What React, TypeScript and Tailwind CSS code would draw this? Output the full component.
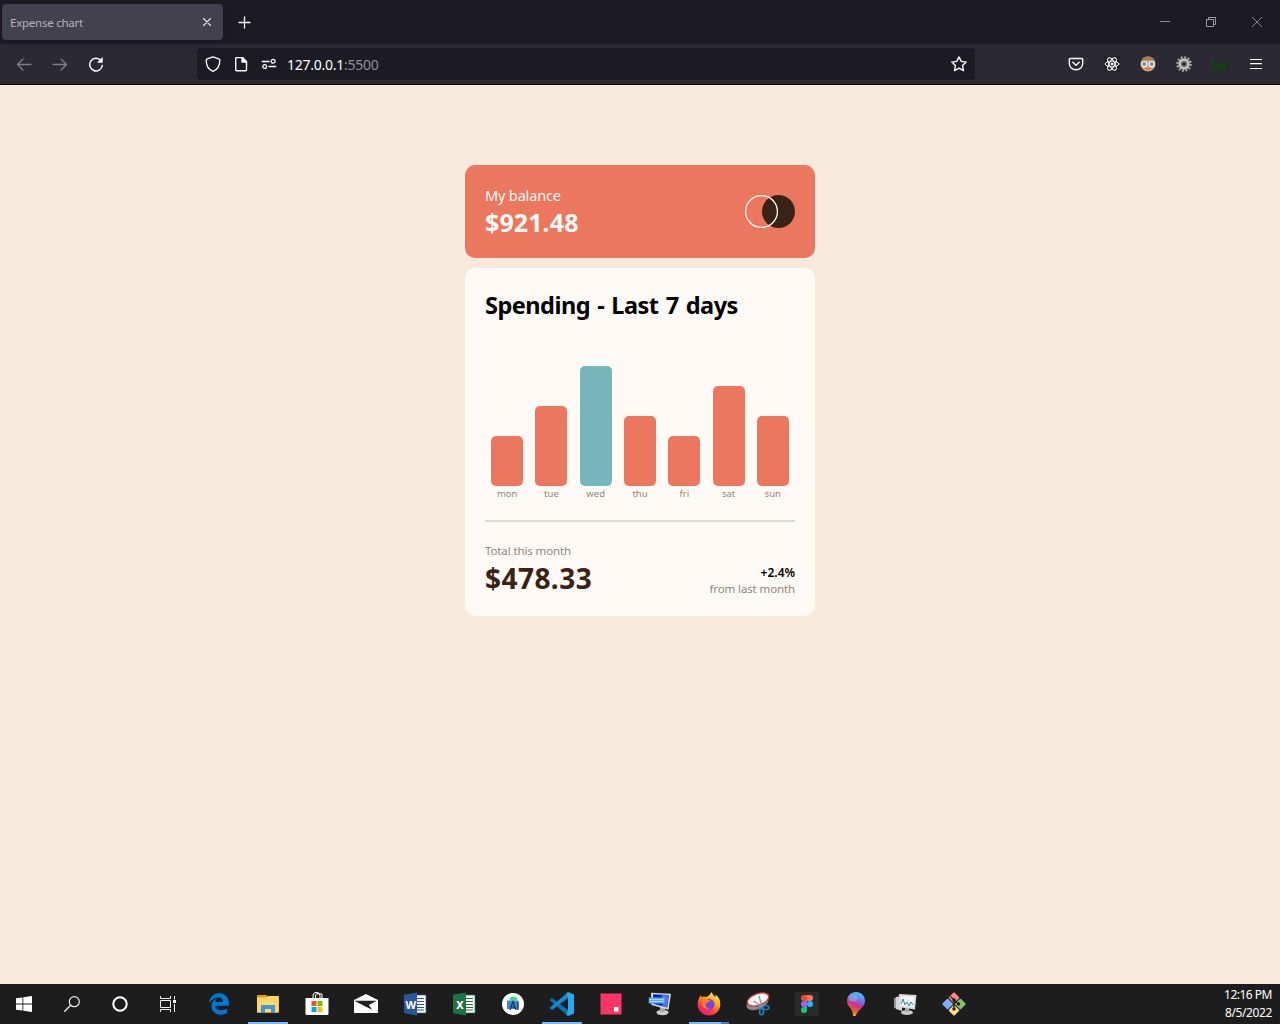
import React from "react";
import { FaEdgeLegacy } from "react-icons/fa6";

type GlyphProps = { children: React.ReactNode; size?: string; box?: string; className?: string };

function Glyph({ children, size = "size-6", box = "0 0 24 24", className = "" }: GlyphProps) {
  return (
    <svg viewBox={box} fill="none" className={`block shrink-0 ${size} ${className}`}>
      {children}
    </svg>
  );
}

function Tool({ children, className = "text-[#fbfbfe]" }: { children: React.ReactNode; className?: string }) {
  return (
    <Glyph size="size-4" box="0 0 16 16" className={className}>
      <g stroke="currentColor" strokeWidth="1.3" strokeLinecap="round" strokeLinejoin="round">
        {children}
      </g>
    </Glyph>
  );
}

function TabStrip() {
  return (
    <div className="flex h-11 items-center bg-[#1c1b22] pl-0.5">
      <div className="flex h-9 w-[221px] items-center justify-between rounded bg-[#42414d] pr-2 pl-2 shadow-sm">
        <span className="pt-0.5 text-[11.5px] tracking-[-0.25px] text-[#b4b3bb]">Expense chart</span>
        <Tool className="text-[#e8e8ec]">
          <path d="M4.5 4.5l7 7M11.5 4.5l-7 7" strokeWidth="1.1" />
        </Tool>
      </div>
      <Tool className="ml-[13px] text-[#fbfbfe]">
        <path d="M8.5 3v11M3 8.5h11" />
      </Tool>
      <div className="ml-auto flex">
        <div className="flex w-[46px] justify-center">
          <Glyph size="size-[10px]" box="0 0 10 10"><path d="M0 4.5h10" stroke="#8d8c92" /></Glyph>
        </div>
        <div className="flex w-[46px] justify-center">
          <Glyph size="size-[10px]" box="0 0 10 10"><path d="M.5 2.5h7v7h-7zM2.500 2.500V.5h7v7h-2" stroke="#98979d" /></Glyph>
        </div>
        <div className="flex w-[46px] justify-center">
          <Glyph size="size-[10px]" box="0 0 10 10"><path d="M0 0l10 10M10 0L0 10" stroke="#98979d" strokeWidth=".9" /></Glyph>
        </div>
      </div>
    </div>
  );
}

function Extensions() {
  return (
    <div className="ml-auto flex items-center gap-5 pr-4">
      <Tool>
        <path d="M2.300 2.500h11.400q1 0 1 1v4a6.700 6.300 0 0 1-13.400 0v-4q0-1 1-1zM4.800 6.300L8 9.300l3.200-3" strokeWidth="1.4" />
      </Tool>
      <Tool>
        <rect width="16" height="16" fill="#23222b" stroke="none" />
        <g strokeWidth="1">
          <ellipse cx="8" cy="8" rx="6.900" ry="2.800" />
          <ellipse cx="8" cy="8" rx="6.900" ry="2.800" transform="rotate(60 8 8)" />
          <ellipse cx="8" cy="8" rx="6.900" ry="2.800" transform="rotate(120 8 8)" />
          <circle cx="8" cy="8" r="1" fill="currentColor" />
        </g>
      </Tool>
      <Glyph size="size-4" box="0 0 16 16">
        <circle cx="8" cy="8" r="7.500" fill="#d99c76" />
        <path d="M.6 6.500C1 2.700 4 .5 8 .5s7 2.200 7.400 6L12 5 9 4 4.500 5z" fill="#a57c50" />
        <circle cx="4.200" cy="8" r="2.600" fill="#5c9fb2" stroke="#e9f3f4" strokeWidth="1.200" />
        <circle cx="11.800" cy="8" r="2.600" fill="#5c9fb2" stroke="#e9f3f4" strokeWidth="1.200" />
        <path d="M5.500 12.500q2.500 1 5 0" stroke="#b9765a" />
      </Glyph>
      <Glyph size="size-4" box="0 0 16 16">
        <circle cx="8" cy="8" r="6.600" stroke="#a9a8a5" strokeWidth="2.400" strokeDasharray="1.900 1.556" />
        <circle cx="8" cy="8" r="4.200" stroke="#bfbebb" strokeWidth="3" />
        <circle cx="8" cy="8" r="2.300" fill="#29282c" stroke="#77767a" />
      </Glyph>
      <span className="flex h-4 w-4 -translate-x-px items-center justify-center pt-0.5 font-['Lato'] text-[13px] leading-none font-black tracking-[-0.5px] text-[#0c470d] italic">bw</span>
      <Tool>
        <path d="M2.500 3.500h11M2.500 7.700h11M2.500 12.500h11" strokeWidth="1.200" />
      </Tool>
    </div>
  );
}

function NavBar() {
  return (
    <div className="flex h-[41px] items-center border-b border-[#0c0c0d] bg-[#2b2a33] pl-4">
      <div className="flex w-[181px] gap-5">
        <Tool className="text-[#7f7e86]"><path d="M15 8.500H1.500M7 3L1.500 8.500 7 14" /></Tool>
        <Tool className="text-[#7f7e86]"><path d="M1 8.500h13.500M9 3l5.500 5.500L9 14" /></Tool>
        <Tool>
          <path d="M12.900 4.600A6.300 6.300 0 1 0 14.300 9.500" strokeWidth="1.500" />
          <path d="M14.300 2v4.300H10z" fill="currentColor" strokeWidth=".8" />
        </Tool>
      </div>
      <div className="flex h-8 w-[778px] items-center gap-3 rounded bg-[#1c1b22] px-2">
        <Tool><path d="M8 .8l5.800 2q1 .3 1 1.400C14.800 9.500 12.500 13.500 8 15.300 3.500 13.500 1.200 9.500 1.200 4.200q0-1.100 1-1.400z" strokeWidth="1.400" /></Tool>
        <Tool>
          <path d="M3.700 1.600h5.800l4 4v8.200q0 1-1 1H3.700q-1 0-1-1V2.600q0-1 1-1z" strokeWidth="1.400" />
          <path d="M9 1.800v4.200h4.300z" fill="currentColor" />
        </Tool>
        <Tool>
          <path d="M1.200 5.500h7M8 10.500h6.800" strokeWidth="1.300" />
          <circle cx="12.200" cy="5.300" r="1.900" /><circle cx="3.700" cy="10.500" r="1.900" />
        </Tool>
        <span className="-ml-0.5 text-[14px] tracking-[-0.26px] text-[#fbfbfe]">127.0.0.1<span className="text-[#8f8f97]">:5500</span></span>
        <Tool className="ml-auto text-[#fbfbfe]">
          <path d="M8 .9l2.200 4.500 5 .7-3.600 3.500.9 5L8 12.200l-4.500 2.400.9-5L.8 6.100l5-.7z" strokeWidth="1.400" />
        </Tool>
      </div>
      <Extensions />
    </div>
  );
}

const days = [
  { day: "mon", bar: "h-[50px] bg-[#ec775f]" },
  { day: "tue", bar: "h-20 bg-[#ec775f]" },
  { day: "wed", bar: "h-[120px] bg-[#76b5bc]" },
  { day: "thu", bar: "h-[70px] bg-[#ec775f]" },
  { day: "fri", bar: "h-[50px] bg-[#ec775f]" },
  { day: "sat", bar: "h-[100px] bg-[#ec775f]" },
  { day: "sun", bar: "h-[70px] bg-[#ec775f]" },
];

function Dashboard() {
  return (
    <main className="flex flex-1 flex-col items-center gap-2.5 bg-[#f7e9dc] pt-20">
      <section className="flex h-[93px] w-[350px] items-center justify-between rounded-[10px] bg-[#ec775f] px-5 text-[#fffaf5]">
        <div>
          <p className="text-[14.500px] leading-5 tracking-[-0.15px]">My balance</p>
          <p className="pt-px text-[25px] leading-8 font-bold tracking-[0.1px]">$921.48</p>
        </div>
        <Glyph size="h-[33px] w-[50px]" box="0 0 50 33">
          <circle cx="33.500" cy="16.500" r="16.500" fill="#382314" />
          <circle cx="16.500" cy="16.500" r="15.900" stroke="#fff" strokeWidth="1.300" />
        </Glyph>
      </section>
      <section className="h-[348px] w-[350px] rounded-[10px] bg-[#fffaf5] px-5">
        <h1 className="pt-5 text-[23.500px] leading-[34px] font-bold tracking-[-0.5px] [word-spacing:1.500px] whitespace-nowrap text-black">Spending - Last 7 days</h1>
        <div className="mt-11 flex h-[134px] items-end justify-between">
          {days.map(({ day, bar }) => (
            <div key={day} className="flex w-[44.300px] flex-col items-center">
              <div className={`w-8 rounded-[5px] ${bar}`} />
              <span className="h-[14px] text-[9.500px] leading-[15px] text-[#92857a]">{day}</span>
            </div>
          ))}
        </div>
        <div className="mt-5 border-t-2 border-[#dfdbd6]" />
        <div className="mt-5 flex items-end justify-between">
          <div>
            <p className="pt-px text-[11.500px] leading-4 tracking-[-0.12px] text-[#92857a]">Total this month</p>
            <p className="text-[28px] leading-[39px] font-bold tracking-[0.45px] text-[#382314]">$478.33</p>
          </div>
          <div className="pb-px text-right text-[12px] leading-4">
            <p className="font-semibold text-black">+2.4%</p>
            <p className="text-[11.500px] tracking-[-0.12px] text-[#92857a]">from last month</p>
          </div>
        </div>
      </section>
    </main>
  );
}

const office = (color: string, dark: string, letter: string) => (
  <div className="relative flex h-6 w-6 items-center justify-center">
    <Glyph>
      <path d="M12 3h11v18H12z" fill="#fff" stroke={color} strokeWidth=".7" />
      <path d="M14 6.500h7M14 9.500h7M14 12.500h7M14 15.500h7M14 18h7" stroke={dark} />
      <path d="M1 2.800L14 .5v23L1 21.200z" fill={color} />
    </Glyph>
    <span className="absolute inset-y-0 left-0 flex w-[15px] items-center justify-center text-[11px] leading-none font-bold text-white">{letter}</span>
  </div>
);

const systemIcons = [
  <Glyph size="size-4" box="0 0 16 16">
    <path d="M0 2.300L6.500 1.400v6.200H0zM7.300 1.300L16 0v7.600H7.300zM0 8.400h6.500v6.200L0 13.700zM7.300 8.400H16V16l-8.700-1.300z" fill="#fff" />
  </Glyph>,
  <Glyph size="size-4" box="0 0 16 16">
    <circle cx="10.300" cy="5.700" r="5" stroke="#eee" strokeWidth="1.200" />
    <path d="M6.700 9.300L.3 15.700" stroke="#eee" strokeWidth="1.300" />
  </Glyph>,
  <Glyph size="size-4" box="0 0 16 16"><circle cx="8" cy="8" r="6.700" stroke="#fff" strokeWidth="2" /></Glyph>,
  <Glyph size="size-4" box="0 0 16 16">
    <path d="M.5 0v2.500h10V0M.5 16v-2.500h10V16M.5 4.500h10v7H.5zM14.500 0v3.500M14.500 8v8" stroke="#eee" />
    <path d="M13 4h3v3h-3z" fill="#fff" />
  </Glyph>,
];

const apps: { name: string; running?: string; icon: React.ReactNode }[] = [
  { name: "edge", icon: <FaEdgeLegacy className="size-[22px] text-[#0078d7]" /> },
  {
    name: "files", running: "w-10",
    icon: (
      <Glyph>
        <path d="M1 3h9.500l1.500 2h11v15.500H1z" fill="#e79c0c" />
        <path d="M1 5.500h10L12 4h10.700v16.500H1z" fill="#ffd768" />
        <path d="M5 21v-7q0-1 1-1h12q1 0 1 1v7h-4v-4H9v4z" fill="#3c97df" />
      </Glyph>
    ),
  },
  {
    name: "store",
    icon: (
      <Glyph>
        <path d="M8 7V4.500q0-4 3.500-4T15 4.500V7M10.500 7V4.500q0-3 3.500-3t3 3V7" stroke="#eee" strokeWidth="1.100" />
        <path d="M.5 6h23v15.500q0 1.500-1.500 1.500H2q-1.500 0-1.500-1.500z" fill="#fff" />
        <path d="M6.500 9h5v5h-5z" fill="#f05125" /><path d="M12.500 9h5v5h-5z" fill="#7fba00" />
        <path d="M6.500 15h5v5h-5z" fill="#00a4ef" /><path d="M12.500 15h5v5h-5z" fill="#ffb900" />
      </Glyph>
    ),
  },
  {
    name: "mail",
    icon: (
      <Glyph>
        <path d="M0 8L12 2l12 6v13H0z" fill="#fff" />
        <path d="M.3 8.700h22.500l-8 4.300 3.500 4.700-7.300-3.400z" fill="#202020" />
      </Glyph>
    ),
  },
  { name: "word", icon: office("#2b579a", "#2b579a", "W") },
  { name: "excel", icon: office("#217346", "#217346", "X") },
  {
    name: "android",
    icon: (
      <Glyph>
        <circle cx="12" cy="12" r="11" fill="#fff" />
        <path d="M6 8.500h11.500V17H6z" fill="#3b84e5" />
        <path d="M8.500 8.500a4 4 0 0 1 8 0z" fill="#3ddc84" />
        <path d="M9 18l3-8.500 3 8.500M10.500 15h3M17 10v8" stroke="#173246" strokeWidth="1.200" />
      </Glyph>
    ),
  },
  {
    name: "code", running: "w-10",
    icon: (
      <Glyph>
        <path d="M0 7.700L2 6l16 12v6L.3 8.800z" fill="#0872b6" />
        <path d="M0 16.300L2 18 18 6V0L.3 15.200z" fill="#1588d1" />
        <path d="M18 0l6 2.500v19L18 24l-1.500-1.500L18 18V6l-1.500-4.500z" fill="#27a9f2" />
      </Glyph>
    ),
  },
  {
    name: "recorder",
    icon: <Glyph><path d="M1.500 1.500h21v21h-21z" fill="#ff3566" stroke="#8d2742" strokeWidth=".6" /><path d="M15 15h4.500v4.500H15z" fill="#fff" /></Glyph>,
  },
  {
    name: "remote",
    icon: (
      <Glyph>
        <ellipse cx="14.500" cy="20.500" rx="6" ry="2.700" fill="#cfcfcb" /><path d="M12 15h5v5h-5z" fill="#aaa" />
        <path d="M3 .8l20 1-2.500 16L3.500 13z" fill="#dbdcda" />
        <path d="M5 2.300l16 .7-1.700 12.500L5.500 12z" fill="#0926b5" />
        <path d="M13 2.700l7.700.4-1.700 12-5-1.200 2-5z" fill="#5278db" />
        <path d="M.7 5.500h16v6H.7z" fill="#5aaaf0" /><path d="M2 7.500h13.500M2 9.500h13.500" stroke="#fff" strokeWidth=".8" strokeDasharray="1.500 1" />
      </Glyph>
    ),
  },
  {
    name: "firefox", running: "w-8",
    icon: (
      <Glyph>
        <defs>
          <linearGradient id="fox" x1="19" y1="1" x2="5" y2="23" gradientUnits="userSpaceOnUse"><stop stopColor="#fff44f" /><stop offset=".4" stopColor="#ff980e" /><stop offset=".7" stopColor="#ff3647" /><stop offset="1" stopColor="#e31587" /></linearGradient>
        </defs>
        <path d="M14.500 0q1 3 4 5 .5-1 0-2.500 4.800 3.500 4.800 9.700a11.300 11.300 0 0 1-22.600 0Q.7 7 3.700 3.300l1 2Q7 3.700 9 5q3.500-1 5.500-5z" fill="url(#fox)" />
        <circle cx="12.300" cy="12.300" r="5.300" fill="#7543e5" />
        <path d="M4.500 8.200Q8 6.500 10.300 8q2 .2 3.200 0-1 1.700-3 2.300-2 1-2 3 .5 2.700 4 3.200-3 1.200-5.500-.7-3-2.600-2.500-7.600z" fill="#ff7b25" />
      </Glyph>
    ),
  },
  {
    name: "snip",
    icon: (
      <Glyph>
        <ellipse cx="11.500" cy="11" rx="11.500" ry="6.300" transform="rotate(-22 11.500 11)" fill="#89898b" />
        <ellipse cx="12" cy="7.500" rx="11.200" ry="5.700" transform="rotate(-20 12 7.500)" fill="#f5f5f5" stroke="#d93640" strokeWidth="1.300" />
        <path d="M13 4l3 10.500M7.500 9l8.500 5.500" stroke="#8b8d8f" strokeWidth="1.200" />
        <ellipse cx="20" cy="15.500" rx="3" ry="2" stroke="#1982bd" strokeWidth="1.600" /><ellipse cx="15.500" cy="19.700" rx="2" ry="3" stroke="#1982bd" strokeWidth="1.600" />
      </Glyph>
    ),
  },
  {
    name: "figma",
    icon: (
      <Glyph>
        <rect width="24" height="24" rx="1" fill="#2a2a2a" />
        <path d="M12 3H9a3 3 0 0 0 0 6h3z" fill="#f24e1e" /><path d="M12 3h3a3 3 0 0 1 0 6h-3z" fill="#ff7262" />
        <path d="M12 9H9a3 3 0 0 0 0 6h3z" fill="#a259ff" /><circle cx="15" cy="12" r="3" fill="#1abcfe" />
        <path d="M12 15H9a3 3 0 1 0 3 3z" fill="#0acf83" />
      </Glyph>
    ),
  },
  {
    name: "paint",
    icon: (
      <Glyph>
        <defs><linearGradient id="drop" x1="18" y1="1" x2="8" y2="24" gradientUnits="userSpaceOnUse"><stop stopColor="#35d5fa" /><stop offset=".3" stopColor="#6f76ee" /><stop offset=".55" stopColor="#d62d8a" /><stop offset=".8" stopColor="#e9671f" /><stop offset="1" stopColor="#ffc83b" /></linearGradient></defs>
        <path d="M12 0c5 0 9 3.700 9 9 0 6-6.500 8-9.500 15H9q.5-4-2-7C5 14.500 3 12.500 3 9c0-5.300 4-9 9-9z" fill="url(#drop)" />
        <ellipse cx="9" cy="6" rx="4.500" ry="3.500" fill="#8bc9f4" opacity=".45" />
      </Glyph>
    ),
  },
  {
    name: "monitor",
    icon: (
      <Glyph>
        <path d="M1 6l4-1v12l-4-1z" fill="#999" /><path d="M3 5l6-1v15l-6-2z" fill="#d4d5d3" />
        <ellipse cx="14" cy="20.500" rx="6" ry="2.500" fill="#c9cbc8" /><path d="M12 16h4v4h-4z" fill="#a7a9a5" />
        <path d="M6 2l17.500 1-1.500 14.500L5 15z" fill="#d8dad7" /><path d="M8 4l13.500.8-1.200 10.500L7 13.500z" fill="#f3f7fa" />
        <path d="M8 12l2-5 2 6 2-3 2 4 2-4 2 3" stroke="#2e7ebc" />
      </Glyph>
    ),
  },
  {
    name: "git",
    icon: (
      <Glyph>
        <g transform="rotate(45 12 12)">
          <rect x="3.500" y="3.500" width="8" height="8" rx="1" fill="#ff8686" /><rect x="12.500" y="3.500" width="8" height="8" rx="1" fill="#7ec569" />
          <rect x="3.500" y="12.500" width="8" height="8" rx="1" fill="#7aaefa" /><rect x="12.500" y="12.500" width="8" height="8" rx="1" fill="#ffe37d" />
        </g>
        <path d="M8.500 4.500L12 8v9M12 8l4.500 4" stroke="#241f1f" strokeWidth="1.300" />
        <g fill="#241f1f"><circle cx="12" cy="8" r="1.700" /><circle cx="16.500" cy="12" r="1.700" /><circle cx="12" cy="17" r="1.700" /></g>
      </Glyph>
    ),
  },
];

function Taskbar() {
  return (
    <footer className="flex h-10 shrink-0 items-stretch bg-[#1d1d1d]">
      {systemIcons.map((icon, i) => (
        <div key={i} className="flex w-12 items-center justify-center">{icon}</div>
      ))}
      <div className="ml-[3px] flex">
        {apps.map(({ name, running, icon }) => (
          <div key={name} className="relative flex w-[48.980px] items-center justify-center">
            {icon}
            {running && (
              <div className="absolute bottom-0 left-[4.500px] flex h-0.5 w-10 bg-[#4d7eb0]">
                <div className={`bg-[#76b9ff] ${running}`} />
              </div>
            )}
          </div>
        ))}
      </div>
      <div className="ml-auto w-16 pr-2 text-right text-[12px] leading-[18px] tracking-[-0.5px] whitespace-nowrap text-white">
        <div className="pt-0.5">12:16 PM</div>
        <div className="tracking-[-0.38px]">8/5/2022</div>
      </div>
    </footer>
  );
}

export default function App() {
  return (
    <div className="flex h-[1024px] w-[1280px] flex-col overflow-hidden font-['Noto_Sans','Open_Sans',sans-serif]">
      <TabStrip />
      <NavBar />
      <Dashboard />
      <Taskbar />
    </div>
  );
}
